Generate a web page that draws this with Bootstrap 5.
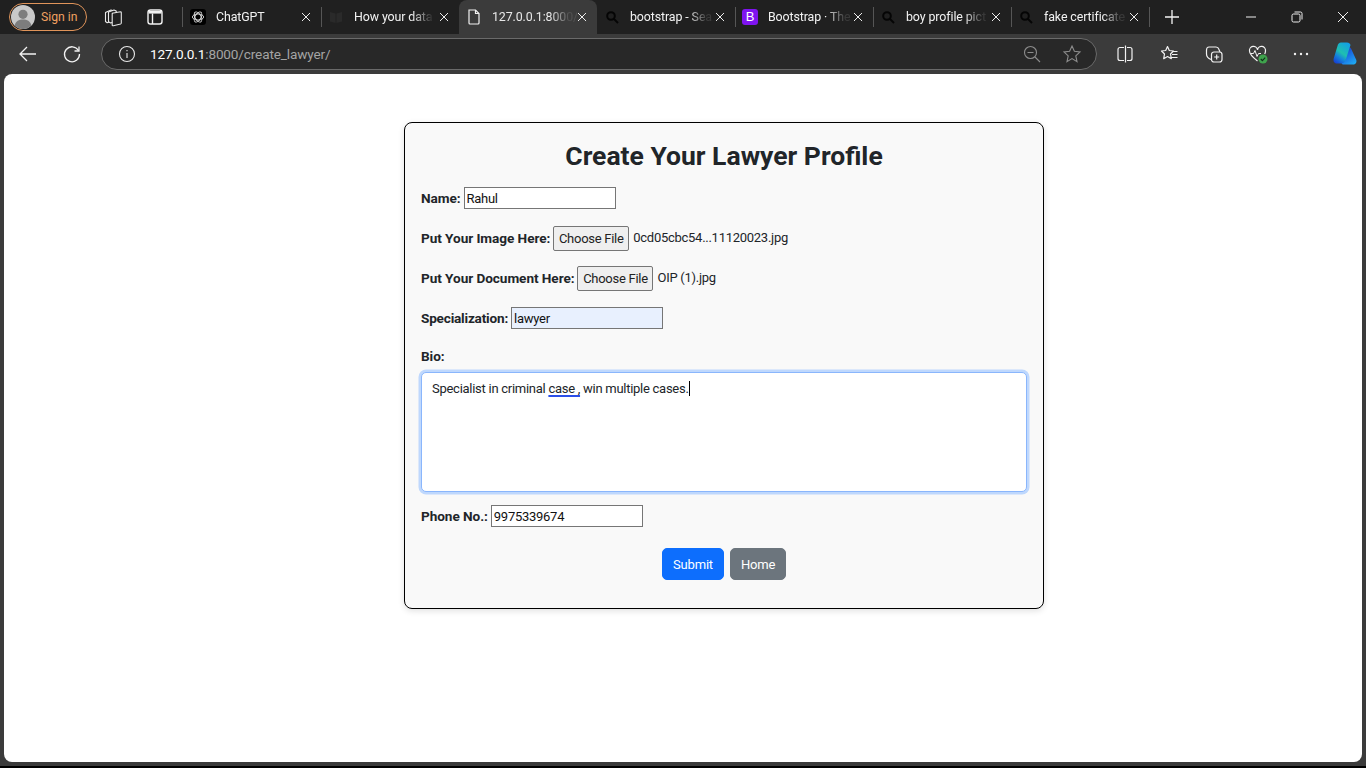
<!DOCTYPE html>
<html lang="en">
<head>
<meta charset="utf-8">
<title>Create Your Lawyer Profile</title>
<link href="https://cdn.jsdelivr.net/npm/bootstrap@5.3.0/dist/css/bootstrap.min.css" rel="stylesheet">
<style>
html,body{height:100%;overflow:hidden}
body{background:#3b3b3b;font-family:Roboto,"Noto Sans",sans-serif;font-size:13px;letter-spacing:-.27px;color:#212529}
.strip{height:34px;background:#202020;color:#fff;padding-left:9px}
.signin{width:78px;height:28px;border:1px solid #e0945a;border-radius:14px;color:#f0a060;font-size:12.2px;letter-spacing:0;padding-left:1px;gap:6px;flex:none}
.avatar{width:24px;height:24px;flex:none}
.ticon{width:20px;height:20px;flex:none}
.tool1{margin-left:16px}.tool2{margin-left:22px}
.sep{width:1px;height:20px;background:#565656;flex:none}
.sep1{margin-left:17px}
.tabx{width:138px;height:34px;flex:none;padding-left:7px;font-size:12.4px;letter-spacing:-.1px;color:#f2f2f2}
.tabx.onx{background:#3b3b3b;border-radius:8px 8px 0 0;color:#e8e8e8}
.fav{width:16px;height:16px;flex:none}
.tname{width:85px;margin-left:10px;flex:none;white-space:nowrap;-webkit-mask-image:linear-gradient(90deg,#000 68%,rgba(0,0,0,.12) 90%);mask-image:linear-gradient(90deg,#000 68%,rgba(0,0,0,.12) 90%)}
.closex{width:10px;height:10px;padding:.5px;flex:none}
.tabx .sep{margin-left:10px}
.bfav{background:#7f13f0;border-radius:3px;color:#fff;font-size:13px;line-height:16px;text-align:center;font-family:"Liberation Sans",sans-serif}
.plus{margin-left:14px;width:18px;height:18px;flex:none}
.winbtn{width:12px;height:12px;flex:none}
.win1{margin-left:64px}.win2{margin-left:34px}
.bar{height:40px;background:#3b3b3b;padding-left:18px}
.urlbox{width:996px;height:32px;margin-left:19px;border:1px solid #6a6a6a;border-radius:16px;background:#282828;padding:0 14px 0 15px;font-size:13.6px;letter-spacing:-.15px;color:#a4a4a4;flex:none}
.urlbox b{font-weight:400;color:#fff}
.urltext{margin-left:13px}
.gap24{margin-left:24px}.gap20{margin-left:20px}.gap18{margin-left:18px}.gap25{margin-left:25px}.gap23{margin-left:23px}
.pilot{margin-left:21px;width:26px;height:26px;flex:none}
.pageview{margin:0 4px;height:688px;background:#fff;border-radius:8px;padding:48px 0 0 400px}
.footline{height:2px;margin-top:4px;background:#000}
.formcard{width:640px;height:487px;background:#f9f9f9;border:1px solid #000;border-radius:8px;padding:16px;box-shadow:0 2px 6px rgba(0,0,0,.12)}
.formcard h2{font-size:26.5px;font-weight:700;line-height:34px;letter-spacing:0;margin:0 0 13px;text-align:center;color:#212529}
.fld{gap:3px;height:24px;margin-bottom:16px;white-space:nowrap}
.fld label,.biolab{font-weight:700;font-size:13.6px;letter-spacing:-.06px}
.fld label.speclab{letter-spacing:-.2px}
.txtin{width:152px;height:22px;border:1px solid #767676;background:#fff;color:#111;padding:0 2px;font:inherit;letter-spacing:inherit;outline:0}
.auto{background:#e8f0fe}
.filebtn{height:25px;width:76px;border:1px solid #767676;border-radius:2px;background:#efefef;color:#222;font:inherit;letter-spacing:inherit;padding:1px 0 0;margin-right:1px}
.biolab{line-height:20px;margin:0 0 6px}
.bioarea{height:120px;padding:6px 10px;font-size:13px;line-height:20px;color:#212529;background:#fff;border:1.5px solid #8ab6fc;border-radius:5px;box-shadow:0 0 0 2.5px #bfd8fd;margin-bottom:12px}
.spell{text-decoration:underline;text-decoration-color:#2c4fe8;text-decoration-thickness:1.5px;text-underline-offset:2px}
.caret-bar{border-right:1px solid #000}
.btnrow{gap:6px;margin-top:20px}
.btnrow .btn{height:32px;font-size:13px;letter-spacing:-.2px;padding:1px 0 0;border-radius:5px}
.subm{width:62px}.homeb{width:56px}
</style>
</head>
<body>
<div class="strip d-flex align-items-center">
  <div class="signin d-flex align-items-center">
    <svg class="avatar" viewBox="0 0 24 24"><circle cx="12" cy="12" r="12" fill="#c9c9c9"/><circle cx="12" cy="9.3" r="4.6" fill="#7d7d7d"/><path d="M3.6 20.6c1-4.400 4.400-6 8.400-6s7.400 1.600 8.400 6A12 12 0 0 1 3.600 20.600z" fill="#7d7d7d"/></svg>
    <span>Sign in</span>
  </div>
  <svg class="ticon tool1" viewBox="0 0 20 20" fill="#202020" stroke="#e8e8e8" stroke-width="1.100" stroke-linejoin="round"><path d="M2.500 5.500 8 3l1.800.8V14L4.200 15.800 2.500 14.500z"/><path d="M5.500 5 11 3l2.200 1v10l-5.500 2-2.200-1.200z"/><path d="M9.200 6.200 17.500 4.800c.5 0 .8.300.8.800v10.500c0 .5-.2.700-.7.900l-7.300 1.800c-.7.100-1.100-.2-1.100-.9V7c0-.4.300-.7.700-.8z"/></svg>
  <svg class="ticon tool2" viewBox="0 0 20 20" fill="none" stroke="#f2f2f2" stroke-width="1.400"><rect x="3" y="3" width="14" height="14" rx="2.500"/><path d="M7.500 6.500V17"/><path d="M3.500 5.300h13" stroke-width="2.600"/></svg>
  <div class="sep sep1"></div>
  <div class="tabx d-flex align-items-center">
    <svg class="fav" viewBox="0 0 16 16"><rect width="16" height="16" rx="3" fill="#000"/><g fill="none" stroke="#e0e0e0" stroke-width=".9"><ellipse cx="8" cy="8" rx="5.600" ry="3"/><ellipse cx="8" cy="8" rx="5.600" ry="3" transform="rotate(60 8 8)"/><ellipse cx="8" cy="8" rx="5.600" ry="3" transform="rotate(120 8 8)"/></g></svg>
    <span class="tname">ChatGPT</span>
    <svg class="closex" viewBox="0 0 10 10" stroke="#f0f0f0" stroke-width="1.100"><path d="M.5.500l9 9M9.500.500l-9 9"/></svg>
    <div class="sep"></div>
  </div>
  <div class="tabx d-flex align-items-center">
    <svg class="fav" viewBox="0 0 16 16" fill="#2a2a2a"><path d="M2 3l5.500 1.500V14L2 12.500zM14 3L8.500 4.500V14l5.500-1.500z"/></svg>
    <span class="tname">How your data</span>
    <svg class="closex" viewBox="0 0 10 10" stroke="#f0f0f0" stroke-width="1.100"><path d="M.5.500l9 9M9.500.500l-9 9"/></svg>
  </div>
  <div class="tabx onx d-flex align-items-center">
    <svg class="fav" viewBox="0 0 16 16" fill="none" stroke="#f2f2f2" stroke-width="1.200"><path d="M3 1h6.500L13 4.500V14a1 1 0 0 1-1 1H4a1 1 0 0 1-1-1z"/><path d="M9.500 1v3.500H13"/></svg>
    <span class="tname">127.0.0.1:8000/</span>
    <svg class="closex" viewBox="0 0 10 10" stroke="#f0f0f0" stroke-width="1.100"><path d="M.5.500l9 9M9.500.500l-9 9"/></svg>
  </div>
  <div class="tabx d-flex align-items-center">
    <svg class="fav" viewBox="0 0 16 16" fill="none" stroke="#050505" stroke-width="2"><circle cx="7" cy="7" r="3.800"/><path d="M10 10l4 4"/></svg>
    <span class="tname">bootstrap - Sea</span>
    <svg class="closex" viewBox="0 0 10 10" stroke="#f0f0f0" stroke-width="1.100"><path d="M.5.500l9 9M9.500.500l-9 9"/></svg>
    <div class="sep"></div>
  </div>
  <div class="tabx d-flex align-items-center">
    <div class="fav bfav">B</div>
    <span class="tname">Bootstrap · The</span>
    <svg class="closex" viewBox="0 0 10 10" stroke="#f0f0f0" stroke-width="1.100"><path d="M.5.500l9 9M9.500.500l-9 9"/></svg>
    <div class="sep"></div>
  </div>
  <div class="tabx d-flex align-items-center">
    <svg class="fav" viewBox="0 0 16 16" fill="none" stroke="#050505" stroke-width="2"><circle cx="7" cy="7" r="3.800"/><path d="M10 10l4 4"/></svg>
    <span class="tname">boy profile pict</span>
    <svg class="closex" viewBox="0 0 10 10" stroke="#f0f0f0" stroke-width="1.100"><path d="M.5.500l9 9M9.500.500l-9 9"/></svg>
    <div class="sep"></div>
  </div>
  <div class="tabx d-flex align-items-center">
    <svg class="fav" viewBox="0 0 16 16" fill="none" stroke="#050505" stroke-width="2"><circle cx="7" cy="7" r="3.800"/><path d="M10 10l4 4"/></svg>
    <span class="tname">fake certificate</span>
    <svg class="closex" viewBox="0 0 10 10" stroke="#f0f0f0" stroke-width="1.100"><path d="M.5.500l9 9M9.500.500l-9 9"/></svg>
    <div class="sep"></div>
  </div>
  <svg class="plus" viewBox="0 0 18 18" stroke="#f4f4f4" stroke-width="1.300"><path d="M9 2v14M2 9h14"/></svg>
  <svg class="winbtn win1" viewBox="0 0 12 12" stroke="#eee" stroke-width="1"><path d="M1 6h10"/></svg>
  <svg class="winbtn win2" viewBox="0 0 12 12" fill="none" stroke="#eee" stroke-width="1"><rect x="1" y="3" width="8" height="8" rx="1.500"/><path d="M3.500 1h6A1.500 1.500 0 0 1 11 2.500v6"/></svg>
  <svg class="winbtn win2" viewBox="0 0 12 12" stroke="#eee" stroke-width="1"><path d="M1 1l10 10M11 1L1 11"/></svg>
</div>
<div class="bar d-flex align-items-center">
  <svg class="ticon" viewBox="0 0 20 20" fill="none" stroke="#f2f2f2" stroke-width="1.300"><path d="M18 10H2M9 3l-7 7 7 7"/></svg>
  <svg class="ticon gap24" viewBox="0 0 20 20" fill="none" stroke="#f2f2f2" stroke-width="1.300"><path d="M16.500 6.500A7.500 7.500 0 1 0 17.500 10"/><path d="M17 2.500v4.500h-4.500"/></svg>
  <div class="urlbox d-flex align-items-center">
    <svg class="ticon" viewBox="0 0 20 20" fill="none" stroke="#e8e8e8" stroke-width="1.100"><circle cx="10" cy="10" r="7.500"/><path d="M10 9v5M10 6v1.200"/></svg>
    <span class="urltext"><b>127.0.0.1</b>:8000/create_lawyer/</span>
    <svg class="ticon ms-auto" viewBox="0 0 20 20" fill="none" stroke="#8c8c8c" stroke-width="1.100"><circle cx="8.500" cy="8.500" r="6"/><path d="M5.500 8.500h6M13 13l5 5"/></svg>
    <svg class="ticon gap20" viewBox="0 0 20 20" fill="none" stroke="#8c8c8c" stroke-width="1.100"><path d="M10 2l2.400 5.300 5.600.700-4.200 3.900 1.200 5.700-5-3-5 3 1.200-5.700L2 8l5.600-.700z"/></svg>
  </div>
  <svg class="ticon gap18" viewBox="0 0 20 20" fill="none" stroke="#f2f2f2" stroke-width="1.200"><path d="M9 3.500H5a2 2 0 0 0-2 2v9a2 2 0 0 0 2 2h4M12 3.500h3a2 2 0 0 1 2 2v9a2 2 0 0 1-2 2h-3M10.500 1.500v17"/></svg>
  <svg class="ticon gap25" viewBox="0 0 20 20" fill="none" stroke="#f2f2f2" stroke-width="1.200" stroke-linejoin="round"><path d="M7.500 2.500l1.800 4 4.200.500-3 3 .8 4.700-3.800-2.200L3.700 14.700l.8-4.700-3-3 4.200-.500z"/><path d="M12.500 7.500h5M12 10.500h5.500M11 13.500h6.500"/></svg>
  <svg class="ticon gap24" viewBox="0 0 20 20" fill="none" stroke="#f2f2f2" stroke-width="1.200" stroke-linejoin="round"><path d="M7 15.500c-2-.8-4.500-3-4.500-5.500V6c0-1.500 1-3 2.500-3h7c1.500 0 2.500 1 3 2.500l1 2.500"/><rect x="7.500" y="8" width="10.500" height="10" rx="2.500" fill="#3b3b3b"/><path d="M12.700 10.500v5M10.200 13h5"/></svg>
  <svg class="ticon gap24" viewBox="0 0 20 20"><path d="M9.500 17C5 13.500 1.500 10.500 1.500 7a4 4 0 0 1 8-1.200A4 4 0 0 1 17.500 7c0 1-.3 2-.8 3" fill="none" stroke="#f2f2f2" stroke-width="1.200"/><path d="M2.500 9.500h3L7 6.500l2 6 1.500-3h2.500" fill="none" stroke="#f2f2f2" stroke-width="1"/><circle cx="15" cy="15" r="4.500" fill="#3fa34d"/><path d="M12.800 15l1.600 1.600 2.800-3" fill="none" stroke="#10301a" stroke-width="1.100"/></svg>
  <svg class="ticon gap23" viewBox="0 0 20 20" fill="#f2f2f2"><circle cx="4" cy="10" r="1.200"/><circle cx="10" cy="10" r="1.200"/><circle cx="16" cy="10" r="1.200"/></svg>
  <svg class="pilot" viewBox="0 0 26 26"><defs><linearGradient id="cp1" x1="0.800" y1="0" x2="0.200" y2="1"><stop offset="0" stop-color="#129ee6"/><stop offset=".5" stop-color="#1fbfb0"/><stop offset=".72" stop-color="#1584dc"/><stop offset="1" stop-color="#1643d4"/></linearGradient><linearGradient id="cp2" x1="0.200" y1="0" x2="0.800" y2="1"><stop offset="0" stop-color="#2530b4"/><stop offset=".35" stop-color="#1a62e0"/><stop offset="1" stop-color="#1eaaf2"/></linearGradient></defs><path d="M16 6c2 0 3.200 1 3.700 3l4.600 10c.7 2.500-.8 4.500-3.300 4.500H11.500c-1 0-1.500-.5-2-1.500 2-.5 3.500-2.500 4-4z" fill="url(#cp2)"/><path d="M9 1.500h6c2 0 3 1.200 3.500 2.500L14 18c-.6 2.300-2.200 4.500-4.500 4.500H5C2.200 22.500 1 20 1.700 17.500L5.500 5C6 3 7.200 1.500 9 1.500z" fill="url(#cp1)"/></svg>
</div>
<main class="pageview">
  <form class="formcard">
    <h2>Create Your Lawyer Profile</h2>
    <div class="fld d-flex align-items-center"><label for="nm">Name:</label><input id="nm" class="txtin" type="text" value="Rahul"></div>
    <div class="fld d-flex align-items-center"><label>Put Your Image Here:</label><button type="button" class="filebtn">Choose File</button><span>0cd05cbc54...11120023.jpg</span></div>
    <div class="fld d-flex align-items-center"><label>Put Your Document Here:</label><button type="button" class="filebtn">Choose File</button><span>OIP (1).jpg</span></div>
    <div class="fld d-flex align-items-center"><label for="sp" class="speclab">Specialization:</label><input id="sp" class="txtin auto" type="text" value="lawyer"></div>
    <div class="biolab">Bio:</div>
    <div class="bioarea form-control">Specialist in criminal <span class="spell">case ,</span> win multiple <span class="caret-bar">cases.</span></div>
    <div class="fld d-flex align-items-center"><label for="ph">Phone No.:</label><input id="ph" class="txtin" type="text" value="9975339674"></div>
    <div class="btnrow d-flex justify-content-center">
      <button type="button" class="btn btn-primary subm">Submit</button>
      <a href="#" class="btn btn-secondary homeb d-flex align-items-center justify-content-center">Home</a>
    </div>
  </form>
</main>
<div class="footline"></div>
<script src="https://cdn.jsdelivr.net/npm/bootstrap@5.3.0/dist/js/bootstrap.bundle.min.js"></script>
</body>
</html>
